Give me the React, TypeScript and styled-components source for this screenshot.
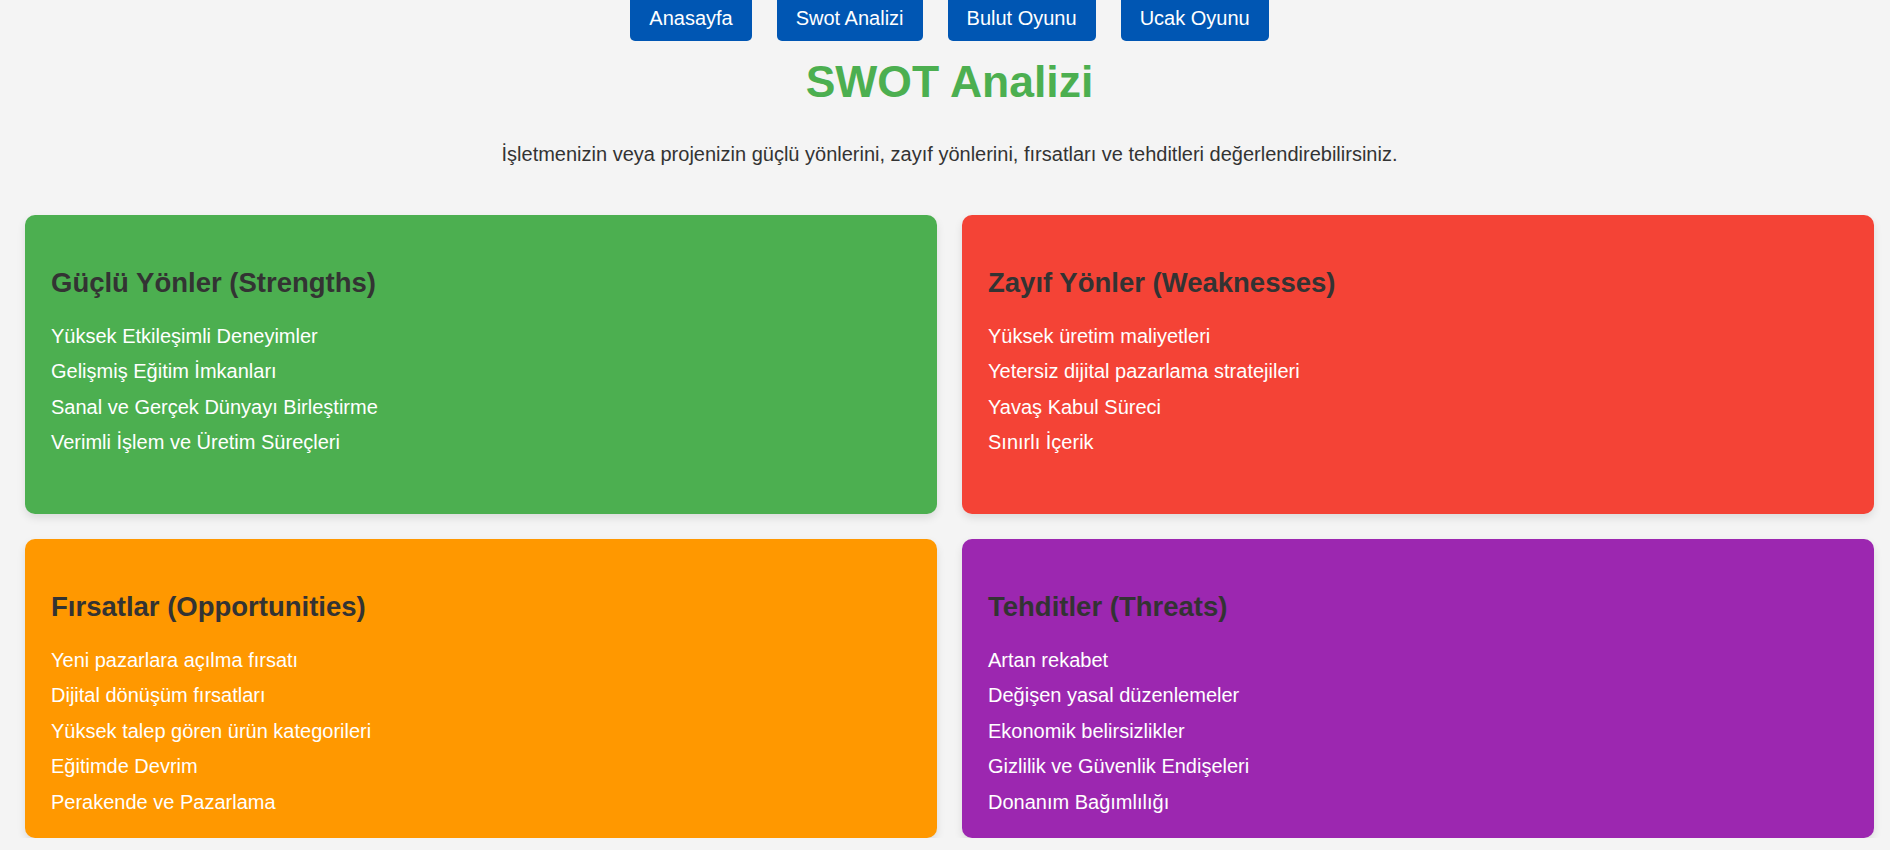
import React from "react";
import styled, { createGlobalStyle } from "styled-components";

const GlobalStyle = createGlobalStyle`
  * { box-sizing: border-box; }
  html, body { margin: 0; padding: 0; }
  body {
    background: #f4f4f4;
    font-family: "Liberation Sans", Arial, sans-serif;
    color: #333;
    overflow: hidden;
  }
`;

const Page = styled.div`
  padding: 0 16px 0 25px;
`;

const Nav = styled.nav`
  display: flex;
  justify-content: center;
  gap: 25px;
  margin-top: -4px;
`;

const NavButton = styled.button`
  background: #0056b3;
  color: #fff;
  border: none;
  border-radius: 5px;
  padding: 10px 19px;
  font-family: "Liberation Sans", Arial, sans-serif;
  font-size: 20px;
  line-height: 25px;
  cursor: pointer;
`;

const Title = styled.h1`
  margin: 16px 0 0;
  text-align: center;
  color: #4caf50;
  font-size: 44.5px;
  line-height: 50px;
  font-weight: bold;
`;

const Subtitle = styled.p`
  margin: 35.5px 0 0;
  text-align: center;
  font-size: 20px;
  line-height: 22px;
  color: #333;
`;

const Grid = styled.div`
  margin-top: 50px;
  display: grid;
  grid-template-columns: 1fr 1fr;
  grid-auto-rows: 1fr;
  column-gap: 25px;
  row-gap: 25px;
`;

const Card = styled.section<{ $bg: string }>`
  background: ${(p) => p.$bg};
  border-radius: 10px;
  padding: 20px 26px 17.5px;
  box-shadow: 0 4px 8px rgba(0, 0, 0, 0.1);
`;

const CardTitle = styled.h2`
  margin: 32.5px 0 19.5px;
  font-size: 27.5px;
  line-height: 32px;
  font-weight: bold;
  color: #333;
`;

const List = styled.ul`
  list-style: none;
  margin: 0;
  padding: 0;
`;

const Item = styled.li`
  font-size: 20px;
  line-height: 35.5px;
  color: #fff;
`;

const sections = [
  {
    title: "Güçlü Yönler (Strengths)",
    bg: "#4caf50",
    items: [
      "Yüksek Etkileşimli Deneyimler",
      "Gelişmiş Eğitim İmkanları",
      "Sanal ve Gerçek Dünyayı Birleştirme",
      "Verimli İşlem ve Üretim Süreçleri",
    ],
  },
  {
    title: "Zayıf Yönler (Weaknesses)",
    bg: "#f44336",
    items: [
      "Yüksek üretim maliyetleri",
      "Yetersiz dijital pazarlama stratejileri",
      "Yavaş Kabul Süreci",
      "Sınırlı İçerik",
    ],
  },
  {
    title: "Fırsatlar (Opportunities)",
    bg: "#ff9800",
    items: [
      "Yeni pazarlara açılma fırsatı",
      "Dijital dönüşüm fırsatları",
      "Yüksek talep gören ürün kategorileri",
      "Eğitimde Devrim",
      "Perakende ve Pazarlama",
    ],
  },
  {
    title: "Tehditler (Threats)",
    bg: "#9c27b0",
    items: [
      "Artan rekabet",
      "Değişen yasal düzenlemeler",
      "Ekonomik belirsizlikler",
      "Gizlilik ve Güvenlik Endişeleri",
      "Donanım Bağımlılığı",
    ],
  },
];

export default function App() {
  return (
    <>
      <GlobalStyle />
      <Page>
        <Nav>
          <NavButton>Anasayfa</NavButton>
          <NavButton>Swot Analizi</NavButton>
          <NavButton>Bulut Oyunu</NavButton>
          <NavButton>Ucak Oyunu</NavButton>
        </Nav>
        <Title>SWOT Analizi</Title>
        <Subtitle>
          İşletmenizin veya projenizin güçlü yönlerini, zayıf yönlerini, fırsatları ve tehditleri değerlendirebilirsiniz.
        </Subtitle>
        <Grid>
          {sections.map((s) => (
            <Card key={s.title} $bg={s.bg}>
              <CardTitle>{s.title}</CardTitle>
              <List>
                {s.items.map((it) => (
                  <Item key={it}>{it}</Item>
                ))}
              </List>
            </Card>
          ))}
        </Grid>
      </Page>
    </>
  );
}
